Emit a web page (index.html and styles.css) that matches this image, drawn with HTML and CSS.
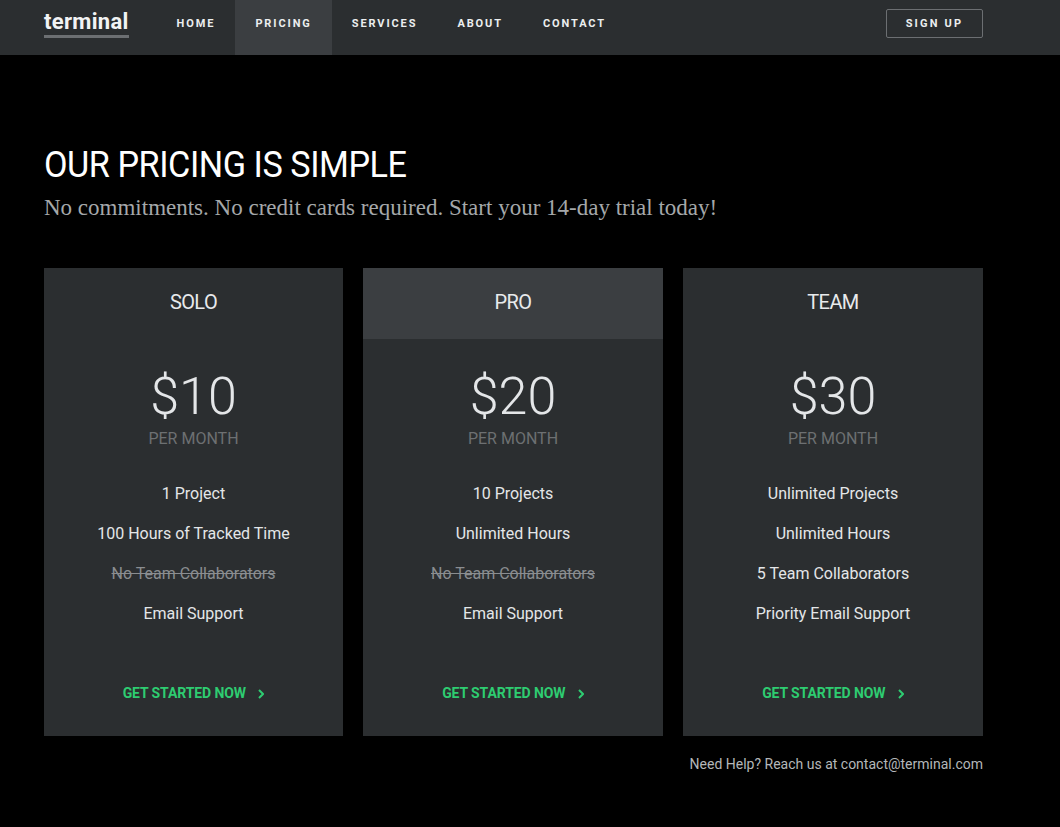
FILE: index.html
```html
<!DOCTYPE html>
<html lang="en">
<head>
    <meta charset="UTF-8">
    <meta name="viewport" content="width=device-width, initial-scale=1.0">
    <title>Terminal - Pricing</title>
    <link rel="stylesheet" href="styles.css">
</head>
<body>
    <nav class="navbar">
        <div class="nav-inner">
            <a class="logo" href="#">terminal</a>
            <ul class="nav-links">
                <li><a href="#">Home</a></li>
                <li><a class="active" href="#">Pricing</a></li>
                <li><a href="#">Services</a></li>
                <li><a href="#">About</a></li>
                <li><a href="#">Contact</a></li>
            </ul>
            <a class="signup" href="#">Sign up</a>
        </div>
    </nav>

    <main class="content">
        <h1>Our pricing is simple</h1>
        <p class="lead">No commitments. No credit cards required. Start your 14-day trial today!</p>

        <div class="plans">
            <div class="plan">
                <div class="plan-head">Solo</div>
                <div class="price">$10</div>
                <div class="period">per month</div>
                <ul class="features">
                    <li>1 Project</li>
                    <li>100 Hours of Tracked Time</li>
                    <li class="off">No Team Collaborators</li>
                    <li>Email Support</li>
                </ul>
                <a class="cta" href="#">Get started now <svg class="chev" width="6" height="10" viewBox="0 0 6 10"><path d="M1 1l4 4-4 4" fill="none" stroke="currentColor" stroke-width="2"/></svg></a>
            </div>
            <div class="plan">
                <div class="plan-head featured">Pro</div>
                <div class="price">$20</div>
                <div class="period">per month</div>
                <ul class="features">
                    <li>10 Projects</li>
                    <li>Unlimited Hours</li>
                    <li class="off">No Team Collaborators</li>
                    <li>Email Support</li>
                </ul>
                <a class="cta" href="#">Get started now <svg class="chev" width="6" height="10" viewBox="0 0 6 10"><path d="M1 1l4 4-4 4" fill="none" stroke="currentColor" stroke-width="2"/></svg></a>
            </div>
            <div class="plan">
                <div class="plan-head">Team</div>
                <div class="price">$30</div>
                <div class="period">per month</div>
                <ul class="features">
                    <li>Unlimited Projects</li>
                    <li>Unlimited Hours</li>
                    <li>5 Team Collaborators</li>
                    <li>Priority Email Support</li>
                </ul>
                <a class="cta" href="#">Get started now <svg class="chev" width="6" height="10" viewBox="0 0 6 10"><path d="M1 1l4 4-4 4" fill="none" stroke="currentColor" stroke-width="2"/></svg></a>
            </div>
        </div>

        <p class="help">Need Help? Reach us at contact@terminal.com</p>
    </main>
</body>
</html>
```

FILE: styles.css
```css
body {
    font-family: 'Roboto', 'Liberation Sans', sans-serif;
    margin: 0;
    padding: 0;
    background: #000;
    color: #e4e6e8;
}

a {
    text-decoration: none;
    color: inherit;
}

.navbar {
    background: #2b2e30;
    height: 55px;
}

.nav-inner {
    width: 939px;
    margin-left: 44px;
    height: 100%;
    display: flex;
    align-items: center;
}

.logo {
    font-size: 22px;
    font-weight: 700;
    color: #f2f3f4;
    letter-spacing: 0.3px;
    padding-bottom: 1px;
    border-bottom: 3px solid #6c6f72;
    line-height: 24px;
    margin-top: -7px;
}

.nav-links {
    list-style: none;
    display: flex;
    margin: 0 0 0 28px;
    padding: 0;
    height: 100%;
    flex: 1;
}

.nav-links li {
    height: 100%;
}

.nav-links a {
    display: flex;
    align-items: center;
    height: 100%;
    box-sizing: border-box;
    padding: 0 20px 8px;
    font-size: 11px;
    font-weight: 700;
    letter-spacing: 1.9px;
    text-transform: uppercase;
    color: #eceeef;
}

.nav-links a.active {
    background: #3b3e41;
}

.signup {
    border: 1px solid #6c6f72;
    border-radius: 2px;
    width: 95px;
    height: 27px;
    display: flex;
    align-items: center;
    justify-content: center;
    font-size: 11px;
    font-weight: 700;
    letter-spacing: 2.2px;
    text-transform: uppercase;
    color: #eceeef;
    margin-top: -8px;
}

.content {
    width: 939px;
    margin-left: 44px;
    padding-top: 89px;
}

h1 {
    margin: 0;
    font-size: 37px;
    font-weight: 400;
    text-transform: uppercase;
    color: #fff;
    letter-spacing: -0.5px;
    transform: scaleX(0.925);
    transform-origin: left;
    line-height: 42px;
}

.lead {
    margin: 7px 0 0;
    font-family: 'Liberation Serif', serif;
    font-size: 23px;
    color: #a5a8aa;
    line-height: 30px;
}

.plans {
    display: grid;
    grid-template-columns: 299px 300px 300px;
    gap: 20px;
    margin-top: 45px;
}

.plan {
    background: #2b2e30;
    height: 468px;
    display: flex;
    flex-direction: column;
    align-items: center;
    text-align: center;
}

.plan-head {
    align-self: stretch;
    height: 71px;
    box-sizing: border-box;
    padding-bottom: 4px;
    display: flex;
    align-items: center;
    justify-content: center;
    font-size: 20px;
    text-transform: uppercase;
    color: #e8eaec;
    letter-spacing: -0.6px;
}

.plan-head.featured {
    background: #3b3e41;
}

.price {
    font-size: 52px;
    font-weight: 300;
    color: #e4e6e8;
    margin-top: 28px;
    line-height: 60px;
}

.period {
    font-size: 16px;
    text-transform: uppercase;
    color: #6d7072;
    line-height: 20px;
    margin-top: 2px;
}

.features {
    list-style: none;
    padding: 0;
    margin: 35px 0 0;
}

.features li {
    font-size: 16px;
    line-height: 20px;
    margin-bottom: 20px;
    color: #e4e6e8;
}

.features li.off {
    text-decoration: line-through;
    color: #8a8d90;
}

.cta {
    margin-top: 41px;
    font-size: 14px;
    font-weight: 700;
    text-transform: uppercase;
    color: #2ecc71;
    letter-spacing: -0.1px;
}

.chev {
    margin-left: 9px;
    vertical-align: -1px;
}

.help {
    text-align: right;
    font-size: 14px;
    color: #b4b7b9;
    margin: 20px 0 0;
}
```
